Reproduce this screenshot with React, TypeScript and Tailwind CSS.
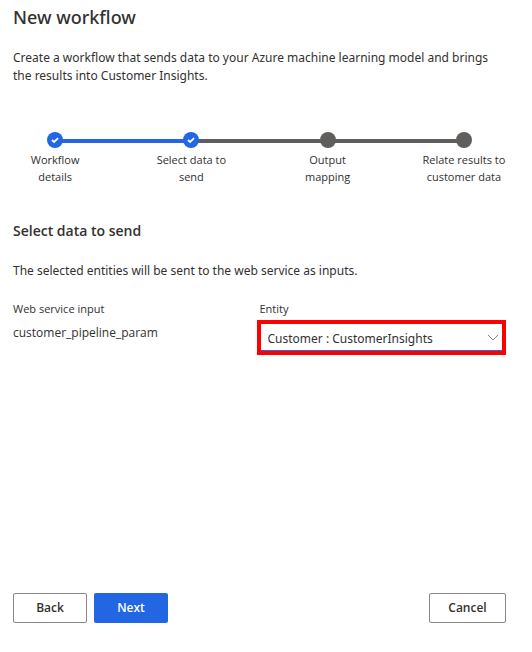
import { Fragment } from "react";

const steps = [
  { lines: ["Workflow", "details"], done: true },
  { lines: ["Select data to", "send"], done: true },
  { lines: ["Output", "mapping"], done: false },
  { lines: ["Relate results to", "customer data"], done: false },
];

function Step({ lines, done, last, lineDone }: { lines: string[]; done: boolean; last: boolean; lineDone: boolean }) {
  return (
    <li className="relative flex flex-1 flex-col items-center">
      {!last && <span className={`absolute top-[7px] left-1/2 h-[4px] w-full ${lineDone ? "bg-[#2266e3]" : "bg-[#605e5c]"}`} />}
      <span className={`relative flex size-4 items-center justify-center rounded-full ${done ? "bg-[#2266e3]" : "bg-[#605e5c]"}`}>
        {done && (
          <svg viewBox="0 0 16 16" className="size-4" fill="none" stroke="white" strokeWidth="1.8">
            <path d="M5 8l2.1 2 4-3.8" />
          </svg>
        )}
      </span>
      <span className="mt-[3px] text-center text-[11px] leading-[17px] whitespace-nowrap">
        {lines.map((line) => (
          <Fragment key={line}>
            {line}
            <br />
          </Fragment>
        ))}
      </span>
    </li>
  );
}

export default function App() {
  return (
    <main className="flex min-h-screen flex-col bg-white pr-[26px] pb-[29px] pl-[13px] font-['Open_Sans','Noto_Sans',sans-serif] text-[12px] text-[#323130]">
      <h1 className="pt-1 font-['Noto_Sans','Open_Sans',sans-serif] text-[18px] leading-[26px] font-medium">New workflow</h1>
      <p className="mt-[19px] pr-2 font-['Noto_Sans','Open_Sans',sans-serif] leading-[18px]">
        Create a workflow that sends data to your Azure machine learning model and brings the results into Customer Insights.
      </p>
      <ol className="-mx-[26px] mt-[47px] flex">
        {steps.map((s, i) => (
          <Step key={s.lines[0]} {...s} last={i === steps.length - 1} lineDone={i === 0} />
        ))}
      </ol>
      <h2 className="mt-9 text-[14px] leading-5 font-semibold">Select data to send</h2>
      <p className="mt-[21px] font-['Noto_Sans','Open_Sans',sans-serif] leading-[18px]">The selected entities will be sent to the web service as inputs.</p>
      <div className="mt-[21px] grid grid-cols-2">
        <div>
          <div className="text-[11px] leading-4">Web service input</div>
          <div className="mt-[7px] leading-[18px]">customer_pipeline_param</div>
        </div>
        <div>
          <label htmlFor="entity" className="block text-[11px] leading-4">Entity</label>
          <div className="relative mt-[3px] -ml-[3px] border-4 border-[#f00]">
            <select id="entity" className="block h-[27px] w-full appearance-none border-b border-[#2266e3] bg-white px-[7px] pt-[3px] font-['Noto_Sans','Open_Sans',sans-serif] outline-none">
              <option>Customer : CustomerInsights</option>
            </select>
            <svg viewBox="0 0 12 8" className="pointer-events-none absolute top-[10px] right-[3px] h-2 w-3" fill="none" stroke="#8a8886">
              <path d="M1 1l5 5 5-5" />
            </svg>
          </div>
        </div>
      </div>
      <div className="mt-auto flex gap-[7px] font-semibold">
        <button className="h-[30px] w-[74px] rounded-[2px] border border-[#8a8886]">Back</button>
        <button className="h-[30px] w-[74px] rounded-[2px] bg-[#2266e3] text-white">Next</button>
        <button className="ml-auto h-[30px] w-[77px] rounded-[2px] border border-[#8a8886]">Cancel</button>
      </div>
    </main>
  );
}
